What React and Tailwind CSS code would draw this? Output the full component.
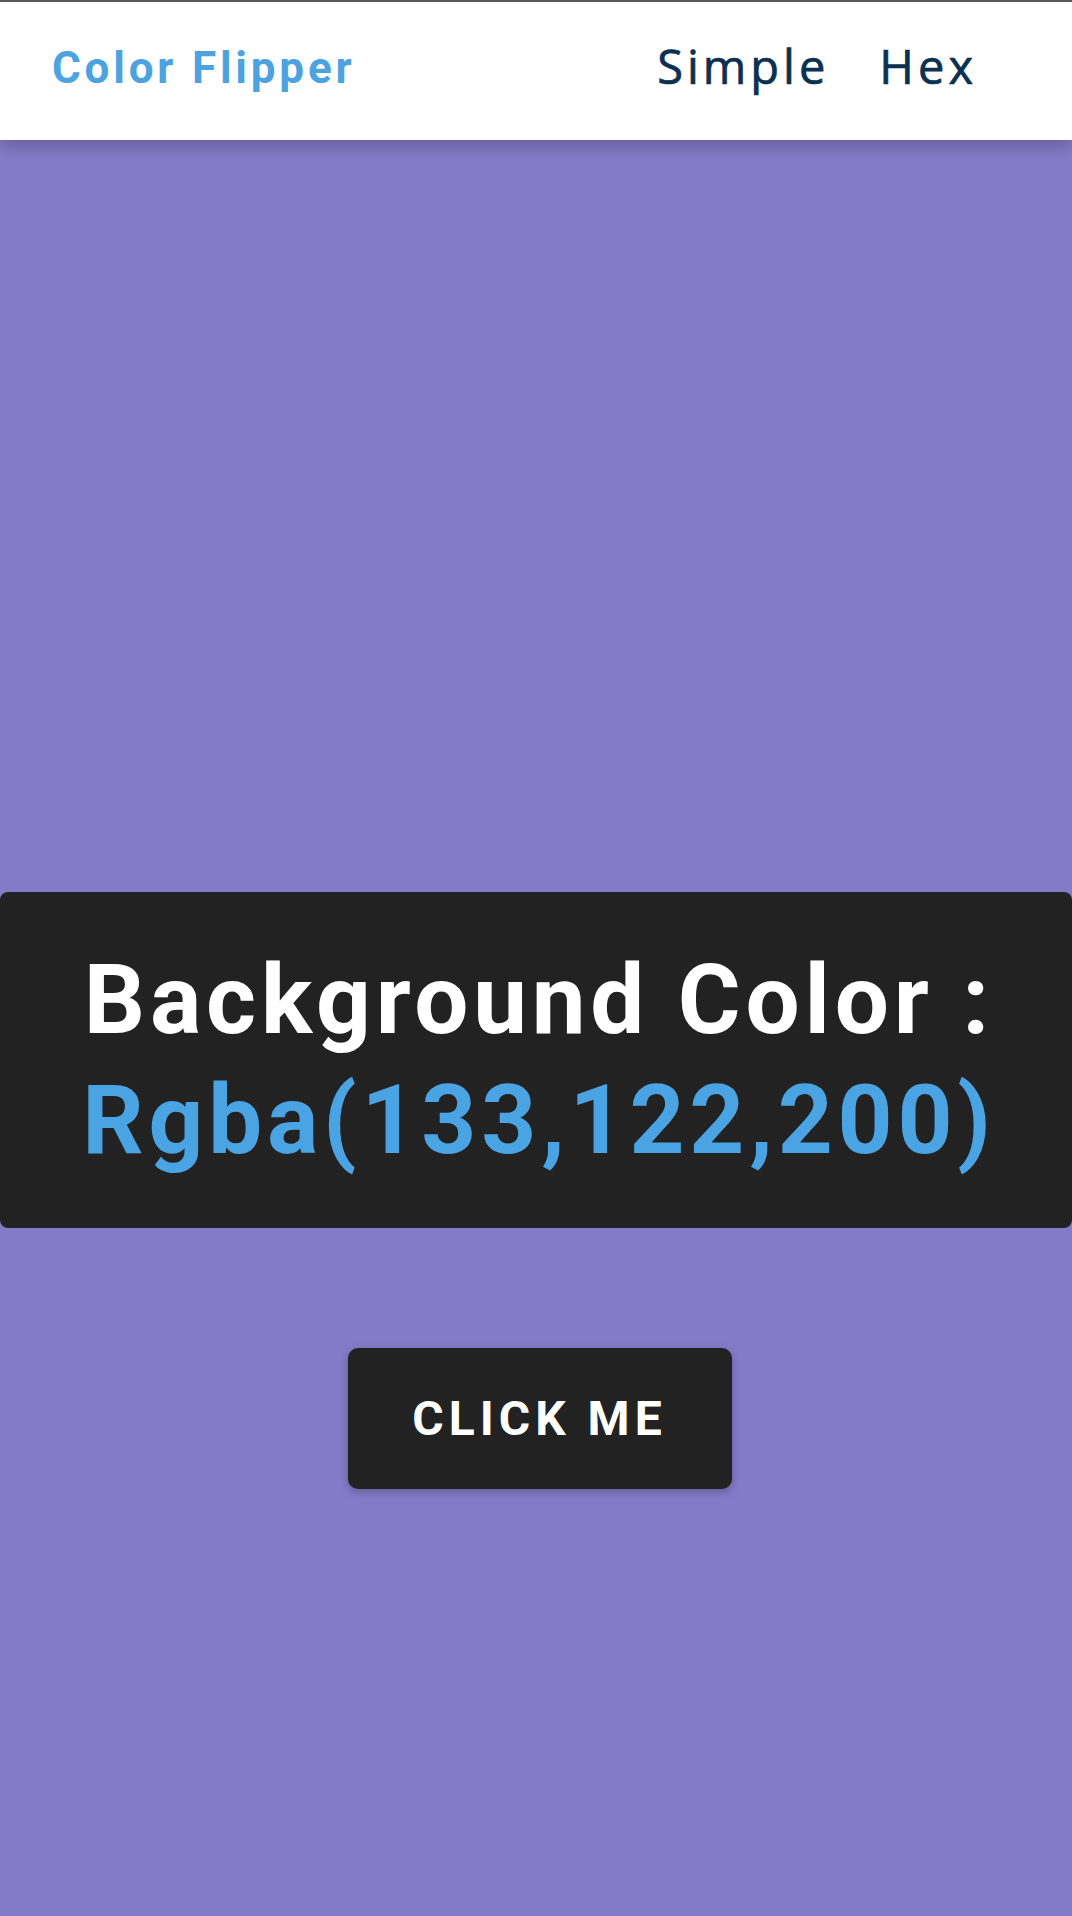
export default function App() {
  const color = { r: 133, g: 122, b: 200 };

  return (
    <div className="min-h-screen bg-[#857ac8] flex flex-col" style={{ backgroundColor: `rgb(${color.r},${color.g},${color.b})` }}>
      <nav className="relative z-10 h-[140px] bg-white border-t-2 border-[#5a5a5a] flex items-center justify-between pl-[52px] pr-[95px] pb-[6px] shadow-[0_4px_18px_rgba(0,0,0,0.28)]">
        <h1 className="font-['Roboto',sans-serif] font-bold text-[44px] tracking-[3.8px] text-[#4ca3df]">Color Flipper</h1>
        <ul className="-mt-[4px] flex items-center gap-[50px] font-['Open_Sans',sans-serif] font-medium text-[47px] tracking-[4px] text-[#0c3050] [-webkit-text-stroke:0.7px_#0c3050]">
          <li>Simple</li>
          <li>Hex</li>
        </ul>
      </nav>

      <main className="flex flex-col items-center pt-[752px] font-['Roboto',sans-serif]">
        <div className="w-full bg-[#222222] rounded-lg py-[48px] pl-[6px] text-center">
          <h2 className="font-bold text-[96px] leading-[120px] tracking-[4.8px] text-white">
            Background Color :
            <br />
            <span className="text-[#4aa3e2]">
              Rgba({color.r},{color.g},{color.b})
            </span>
          </h2>
        </div>

        <button className="mt-[120px] ml-[7px] w-[384px] h-[141px] bg-[#222222] rounded-[10px] shadow-[0_3px_8px_rgba(0,0,0,0.25)] text-white font-bold text-[48px] tracking-[5px] uppercase">
          Click me
        </button>
      </main>
    </div>
  );
}
